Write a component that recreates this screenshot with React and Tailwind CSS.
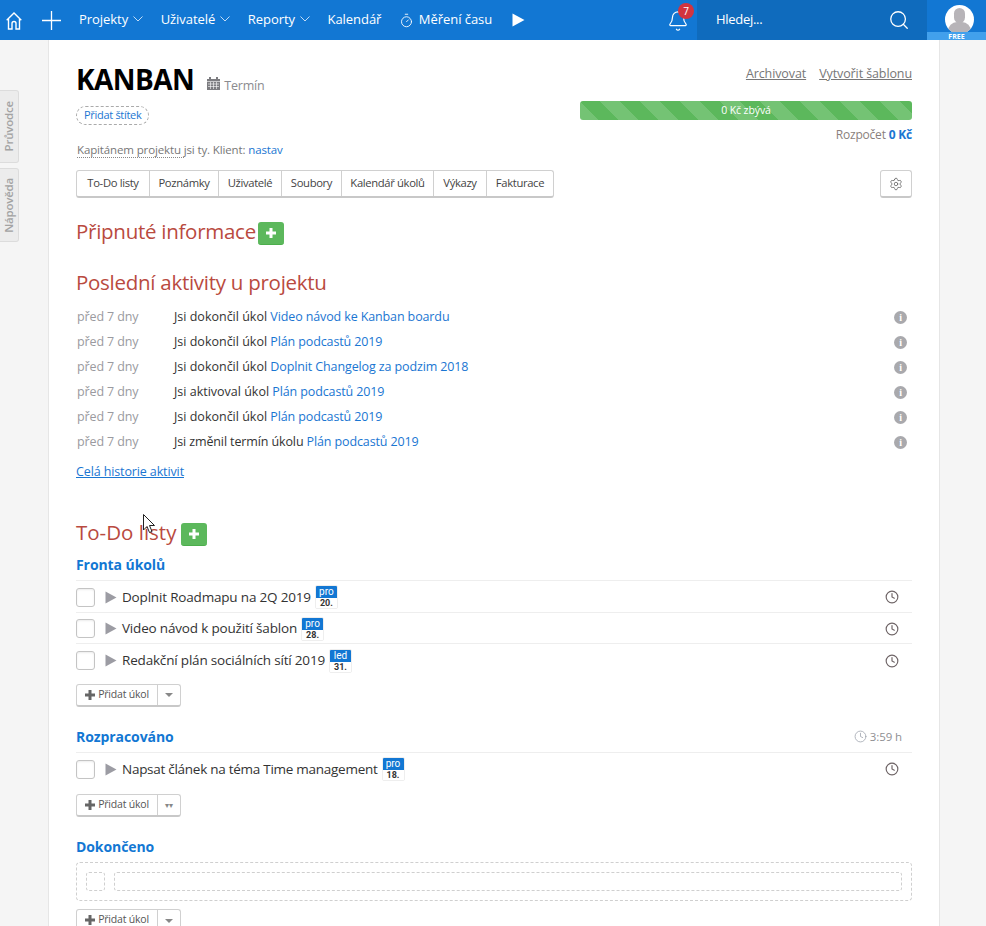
import React from "react";
import { Bell, Search, Timer, Settings, Clock } from "lucide-react";

const font = { fontFamily: '"Open Sans", sans-serif' };

function Cross({ size, w, color }) {
  return (
    <svg width={size} height={size} viewBox={`0 0 ${size} ${size}`} className="shrink-0">
      <path d={`M${size / 2} 0V${size}M0 ${size / 2}H${size}`} stroke={color} strokeWidth={w} fill="none" />
    </svg>
  );
}

function NavItem({ children, chevron }) {
  return (
    <span className="flex items-center text-[13px] tracking-[-0.05px] text-white whitespace-nowrap">
      {children}
      {chevron && (
        <svg width="10" height="6" viewBox="0 0 10 6" className="ml-[5px] mt-[-3px]">
          <path d="M0.5 0.5 L5 5 L9.5 0.5" fill="none" stroke="#c2dcf5" strokeWidth="1" />
        </svg>
      )}
    </span>
  );
}

function Green() {
  return (
    <span className="inline-flex h-[23px] w-[26px] items-center justify-center rounded-[3px] border-b border-[#4cae4c] bg-[#5cb85c]">
      <Cross size={10} w={3} color="white" />
    </span>
  );
}

function Activity({ text, link, wide }) {
  return (
    <div className="flex h-[25px] items-center text-[12.5px] tracking-[-0.12px]">
      <span className="w-[97px] text-[#9a9aa0]">před 7 dny</span>
      <span className={wide ? "tracking-[0px] text-[#333]" : "text-[#333]"}>{text}&nbsp;</span>
      <a className="text-[#1a76d2]">{link}</a>
      <span className="ml-auto mr-[5px] flex h-[13px] w-[13px] items-center justify-center rounded-full bg-[#a9a9ad] text-[10px] font-bold leading-none text-white" style={{ fontFamily: '"Liberation Serif", serif' }}>i</span>
    </div>
  );
}

function DateBadge({ m, d }) {
  return (
    <span className="ml-[4px] flex w-[23px] flex-col overflow-hidden rounded-[2px] border border-[#eeeeee] text-center leading-none" style={{ fontFamily: "Roboto, sans-serif" }}>
      <span className="h-[12px] bg-[#1277d3] text-[10px] leading-[11px] text-white">{m}</span>
      <span className="h-[10px] bg-white text-[9px] font-bold leading-[10px] text-[#333]">{d}</span>
    </span>
  );
}

function Triangle() {
  return (
    <svg width="12" height="13" viewBox="0 0 12 13" className="ml-[10px] shrink-0">
      <path d="M0.5 0.5 L11.5 6.5 L0.5 12.5 Z" fill="#9c9ca3" />
    </svg>
  );
}

function Task({ title, m, d, last, tight }) {
  return (
    <div className={`flex h-[31.5px] items-center pt-px ${last ? "" : "border-b border-[#eeeeee]"}`}>
      <span className="h-[19px] w-[19px] shrink-0 rounded-[3px] border border-[#c4c4c4] bg-white shadow-[inset_0_1px_2px_rgba(0,0,0,0.08)]" />
      <Triangle />
      <span className={`ml-[5px] text-[13.5px] text-[#333] ${tight ? "tracking-[-0.27px]" : "tracking-[-0.18px]"}`}>{title}</span>
      <DateBadge m={m} d={d} />
      <Clock size={14} strokeWidth={2} className="ml-auto mr-[13px] text-[#6f6567]" />
    </div>
  );
}

function AddTask({ small }) {
  return (
    <div className="flex h-[23px] w-[105px] items-stretch rounded-[3px] border border-b-2 border-[#d0d0d0] border-b-[#c8c8c8] bg-white text-[10.5px] tracking-[-0.2px] text-[#555]">
      <span className="flex w-[81px] items-center justify-center gap-[3px] border-r border-[#d0d0d0]">
        <Cross size={10} w={3} color="#666" />
        Přidat úkol
      </span>
      <span className="flex flex-1 items-center justify-center">
        {small ? (
          <span className="text-[8px] leading-none text-[#888]">▾▾</span>
        ) : (
          <span className="mt-[1px] h-0 w-0 border-x-[4px] border-t-[4px] border-x-transparent border-t-[#888]" />
        )}
      </span>
    </div>
  );
}

function SideTab({ label, h }) {
  return (
    <div className="flex w-[19px] items-center justify-center rounded-r-[3px] border border-l-0 border-[#dcdcdc] bg-[#ececec]" style={{ height: h }}>
      <span className="whitespace-nowrap text-[11.5px] font-semibold tracking-[-0.2px] text-[#a3a3a3]" style={{ writingMode: "vertical-rl", transform: "rotate(180deg)" }}>
        {label}
      </span>
    </div>
  );
}

const tabs = [["To-Do listy", 72], ["Poznámky", 69], ["Uživatelé", 63], ["Soubory", 60], ["Kalendář úkolů", 92], ["Výkazy", 53], ["Fakturace", 67]];

const h2 = "text-[20.5px] leading-[29px] tracking-[-0.27px] text-[#b94a40]";
const h3 = "text-[14px] font-bold leading-[19px] tracking-[-0.08px] text-[#1277d3]";

export default function App() {
  return (
    <div className="relative h-[926px] overflow-hidden bg-[#f5f5f5]" style={font}>
      <header className="flex h-10 items-center bg-[#1277d3]">
        <svg width="16" height="18" viewBox="0 0 16 18" className="ml-[6px] mt-[1px] text-white">
          <path d="M0.7 8.2 L8 1 L15.3 8.2" fill="none" stroke="currentColor" strokeWidth="1.4" />
          <path d="M2.5 7 V17 H6 V11.5 a2 2 0 0 1 4 0 V17 H13.5 V7" fill="none" stroke="currentColor" strokeWidth="1.4" />
        </svg>
        <span className="ml-[20px] flex"><Cross size={19} w={1.3} color="white" /></span>
        <div className="ml-[18px] flex items-center gap-[17.5px]">
          <NavItem chevron>Projekty</NavItem>
          <NavItem chevron>Uživatelé</NavItem>
          <NavItem chevron>Reporty</NavItem>
          <NavItem>Kalendář</NavItem>
          <NavItem>
            <Timer size={15} strokeWidth={1.4} className="mr-[5px]" />
            Měření času
          </NavItem>
          <svg width="13" height="14" viewBox="0 0 13 14" className="ml-[2px]">
            <path d="M0.5 0.5 L12.5 7 L0.5 13.5 Z" fill="white" />
          </svg>
        </div>
        <div className="relative ml-auto mr-[8px]">
          <Bell size={22} strokeWidth={1.3} className="mt-[2px] text-white" />
          <span className="absolute left-[11px] top-[-5px] flex h-[16px] w-[16px] items-center justify-center rounded-full bg-[#d2343f] text-[10px] text-white">7</span>
        </div>
        <div className="flex h-10 w-[230px] items-center bg-[#0f6bbd] pl-[19px] pr-[17px] text-[13px] tracking-[-0.3px] text-white">
          Hledej...
          <Search size={22} strokeWidth={1.4} className="ml-auto" />
        </div>
        <div className="relative h-10 w-[59px]">
          <span className="absolute left-[18px] top-[5px] h-[29px] w-[29px] overflow-hidden rounded-full bg-white">
            <span className="absolute left-[9px] top-[3px] h-[15px] w-[11px] rounded-full bg-[#b7b4b8]" />
            <span className="absolute left-[3px] top-[17px] h-[14px] w-[23px] rounded-t-[9px] bg-[#b7b4b8]" />
          </span>
          <span className="absolute bottom-0 left-0 h-[8px] w-full bg-[#42a0ec] text-center text-[7px] font-bold leading-[9px] text-white">FREE</span>
        </div>
      </header>

      <div className="absolute left-0 top-[90px] flex flex-col gap-[5px]">
        <SideTab label="Průvodce" h={73} />
        <SideTab label="Nápověda" h={74} />
      </div>

      <svg className="absolute left-[143px] top-[514px] z-10" width="13" height="20" viewBox="0 0 13 20">
        <path d="M0.5 0.5 L0.5 16 L4 12.5 L6.5 18.5 L9 17.5 L6.5 11.5 L11.5 11.5 Z" fill="white" stroke="#222" strokeWidth="1" />
      </svg>

      <main className="ml-[48px] h-[886px] w-[892px] border-x border-[#e6e6e6] bg-white pl-[27px] pr-[27px]">
        <div className="flex justify-between">
          <div>
            <div className="flex items-end pt-[20px]">
              <h1 className="text-[28px] font-bold leading-[38px] tracking-[-0.55px] text-black">KANBAN</h1>
              <svg width="13" height="13" viewBox="0 0 13 13" className="mb-[8px] ml-[13px]">
                <path d="M0 2H13V13H0Z" fill="#7c7c80" />
                <path d="M3 0V3M10 0V3" stroke="#7c7c80" strokeWidth="2" />
                <path d="M0 4.5H13M1 7H12M1 9.5H12M3.5 5V12M6.5 5V12M9.5 5V12" stroke="#fff" strokeWidth="0.6" fill="none" />
              </svg>
              <span className="mb-[2px] ml-[4px] text-[12.5px] tracking-[-0.2px] text-[#8b8b8f]">Termín</span>
            </div>
            <div className="mt-[8px] inline-flex h-[19px] items-center rounded-full border border-dashed border-[#aaa] px-[7px] text-[11px] tracking-[-0.3px] text-[#1a76d2]">Přidat štítek</div>
            <div className="mt-[17px] ml-px text-[11.5px] leading-[16px] tracking-[-0.13px] text-[#777]">
              <span className="border-b border-dotted border-[#888]">Kapitánem projektu </span>jsi ty. Klient: <a className="text-[#1a76d2]">nastav</a>
            </div>
          </div>
          <div className="w-[332px] pt-[25px] text-right">
            <div className="flex justify-end gap-[13px] text-[12.5px] leading-[18px] tracking-[-0.1px] text-[#777]">
              <span className="underline">Archivovat</span>
              <span className="underline">Vytvořit šablonu</span>
            </div>
            <div
              className="mt-[18px] h-[19px] rounded-[3px] text-center text-[10.5px] leading-[19px] tracking-[-0.1px] text-white"
              style={{ backgroundColor: "#5cb85c", backgroundImage: "linear-gradient(45deg,transparent 25%,rgba(255,255,255,.15) 25%,rgba(255,255,255,.15) 50%,transparent 50%,transparent 75%,rgba(255,255,255,.15) 75%)", backgroundSize: "40px 40px" }}
            >
              0 Kč zbývá
            </div>
            <div className="mt-[6px] text-[12px] leading-[17px] tracking-[-0.2px] text-[#8a7f7c]">
              Rozpočet <span className="font-bold text-[#1a76d2]">0 Kč</span>
            </div>
          </div>
        </div>

        <div className="mt-[12px] flex items-start justify-between">
          <div className="flex h-[28px] rounded-[3px] border border-b-2 border-[#d0d0d0] border-b-[#c8c8c8]">
            {tabs.map(([t, w], i) => (
              <span key={t} className={`flex items-center justify-center text-[11.25px] tracking-[-0.35px] text-[#444] ${i ? "border-l border-[#d0d0d0]" : ""}`} style={{ width: w }}>
                {t}
              </span>
            ))}
          </div>
          <span className="flex h-[28px] w-[32px] items-center justify-center rounded-[3px] border border-b-2 border-[#d0d0d0] border-b-[#c8c8c8]">
            <Settings size={14} strokeWidth={1.4} className="text-[#666]" />
          </span>
        </div>

        <div className="mt-[19px] flex items-center gap-[2px]">
          <h2 className={h2}>Připnuté informace</h2>
          <span className="mt-[3px] flex"><Green /></span>
        </div>

        <h2 className={`mt-[22px] ${h2}`}>Poslední aktivity u projektu</h2>

        <div className="mt-[8px] ml-px">
          <Activity wide text="Jsi dokončil úkol" link="Video návod ke Kanban boardu" />
          <Activity wide text="Jsi dokončil úkol" link="Plán podcastů 2019" />
          <Activity wide text="Jsi dokončil úkol" link="Doplnit Changelog za podzim 2018" />
          <Activity wide text="Jsi aktivoval úkol" link="Plán podcastů 2019" />
          <Activity wide text="Jsi dokončil úkol" link="Plán podcastů 2019" />
          <Activity text="Jsi změnil termín úkolu" link="Plán podcastů 2019" />
        </div>
        <a className="mt-[8px] block text-[12.5px] leading-[18px] tracking-[-0.12px] text-[#1a76d2] underline">Celá historie aktivit</a>

        <div className="mt-[37px] flex items-center gap-[5px]">
          <h2 className="text-[20.5px] leading-[29px] tracking-[0px] text-[#b94a40]">To-Do listy</h2>
          <span className="mt-[3px] flex"><Green /></span>
        </div>

        <h3 className={`mt-[8px] ${h3}`}>Fronta úkolů</h3>
        <div className="mt-[6px] border-t border-[#eeeeee]">
          <Task title="Doplnit Roadmapu na 2Q 2019" m="pro" d="20." />
          <Task title="Video návod k použití šablon" m="pro" d="28." />
          <Task title="Redakční plán sociálních sítí 2019" m="led" d="31." last />
        </div>
        <div className="mt-[8px]"><AddTask /></div>

        <div className="mt-[20px] flex items-center justify-between">
          <h3 className={h3}>Rozpracováno</h3>
          <span className="mr-[10px] flex items-center gap-[3px] text-[11.5px] tracking-[-0.1px] text-[#8f8f93]">
            <Clock size={13} strokeWidth={1.4} className="text-[#9aa0aa]" /> 3:59 h
          </span>
        </div>
        <div className="mt-[6px] border-t border-[#eeeeee]">
          <Task tight title="Napsat článek na téma Time management" m="pro" d="18." last />
        </div>
        <div className="mt-[10px]"><AddTask small /></div>

        <h3 className={`mt-[20px] ${h3}`}>Dokončeno</h3>
        <div className="mt-[6px] flex h-[39px] items-center gap-[9px] rounded-[4px] border border-dashed border-[#cfcfcf] px-[9px]">
          <span className="h-[19px] w-[19px] rounded-[3px] border border-dashed border-[#cfcfcf]" />
          <span className="h-[19px] flex-1 rounded-[3px] border border-dashed border-[#cfcfcf]" />
        </div>
        <div className="mt-[8px]"><AddTask /></div>
      </main>
    </div>
  );
}
